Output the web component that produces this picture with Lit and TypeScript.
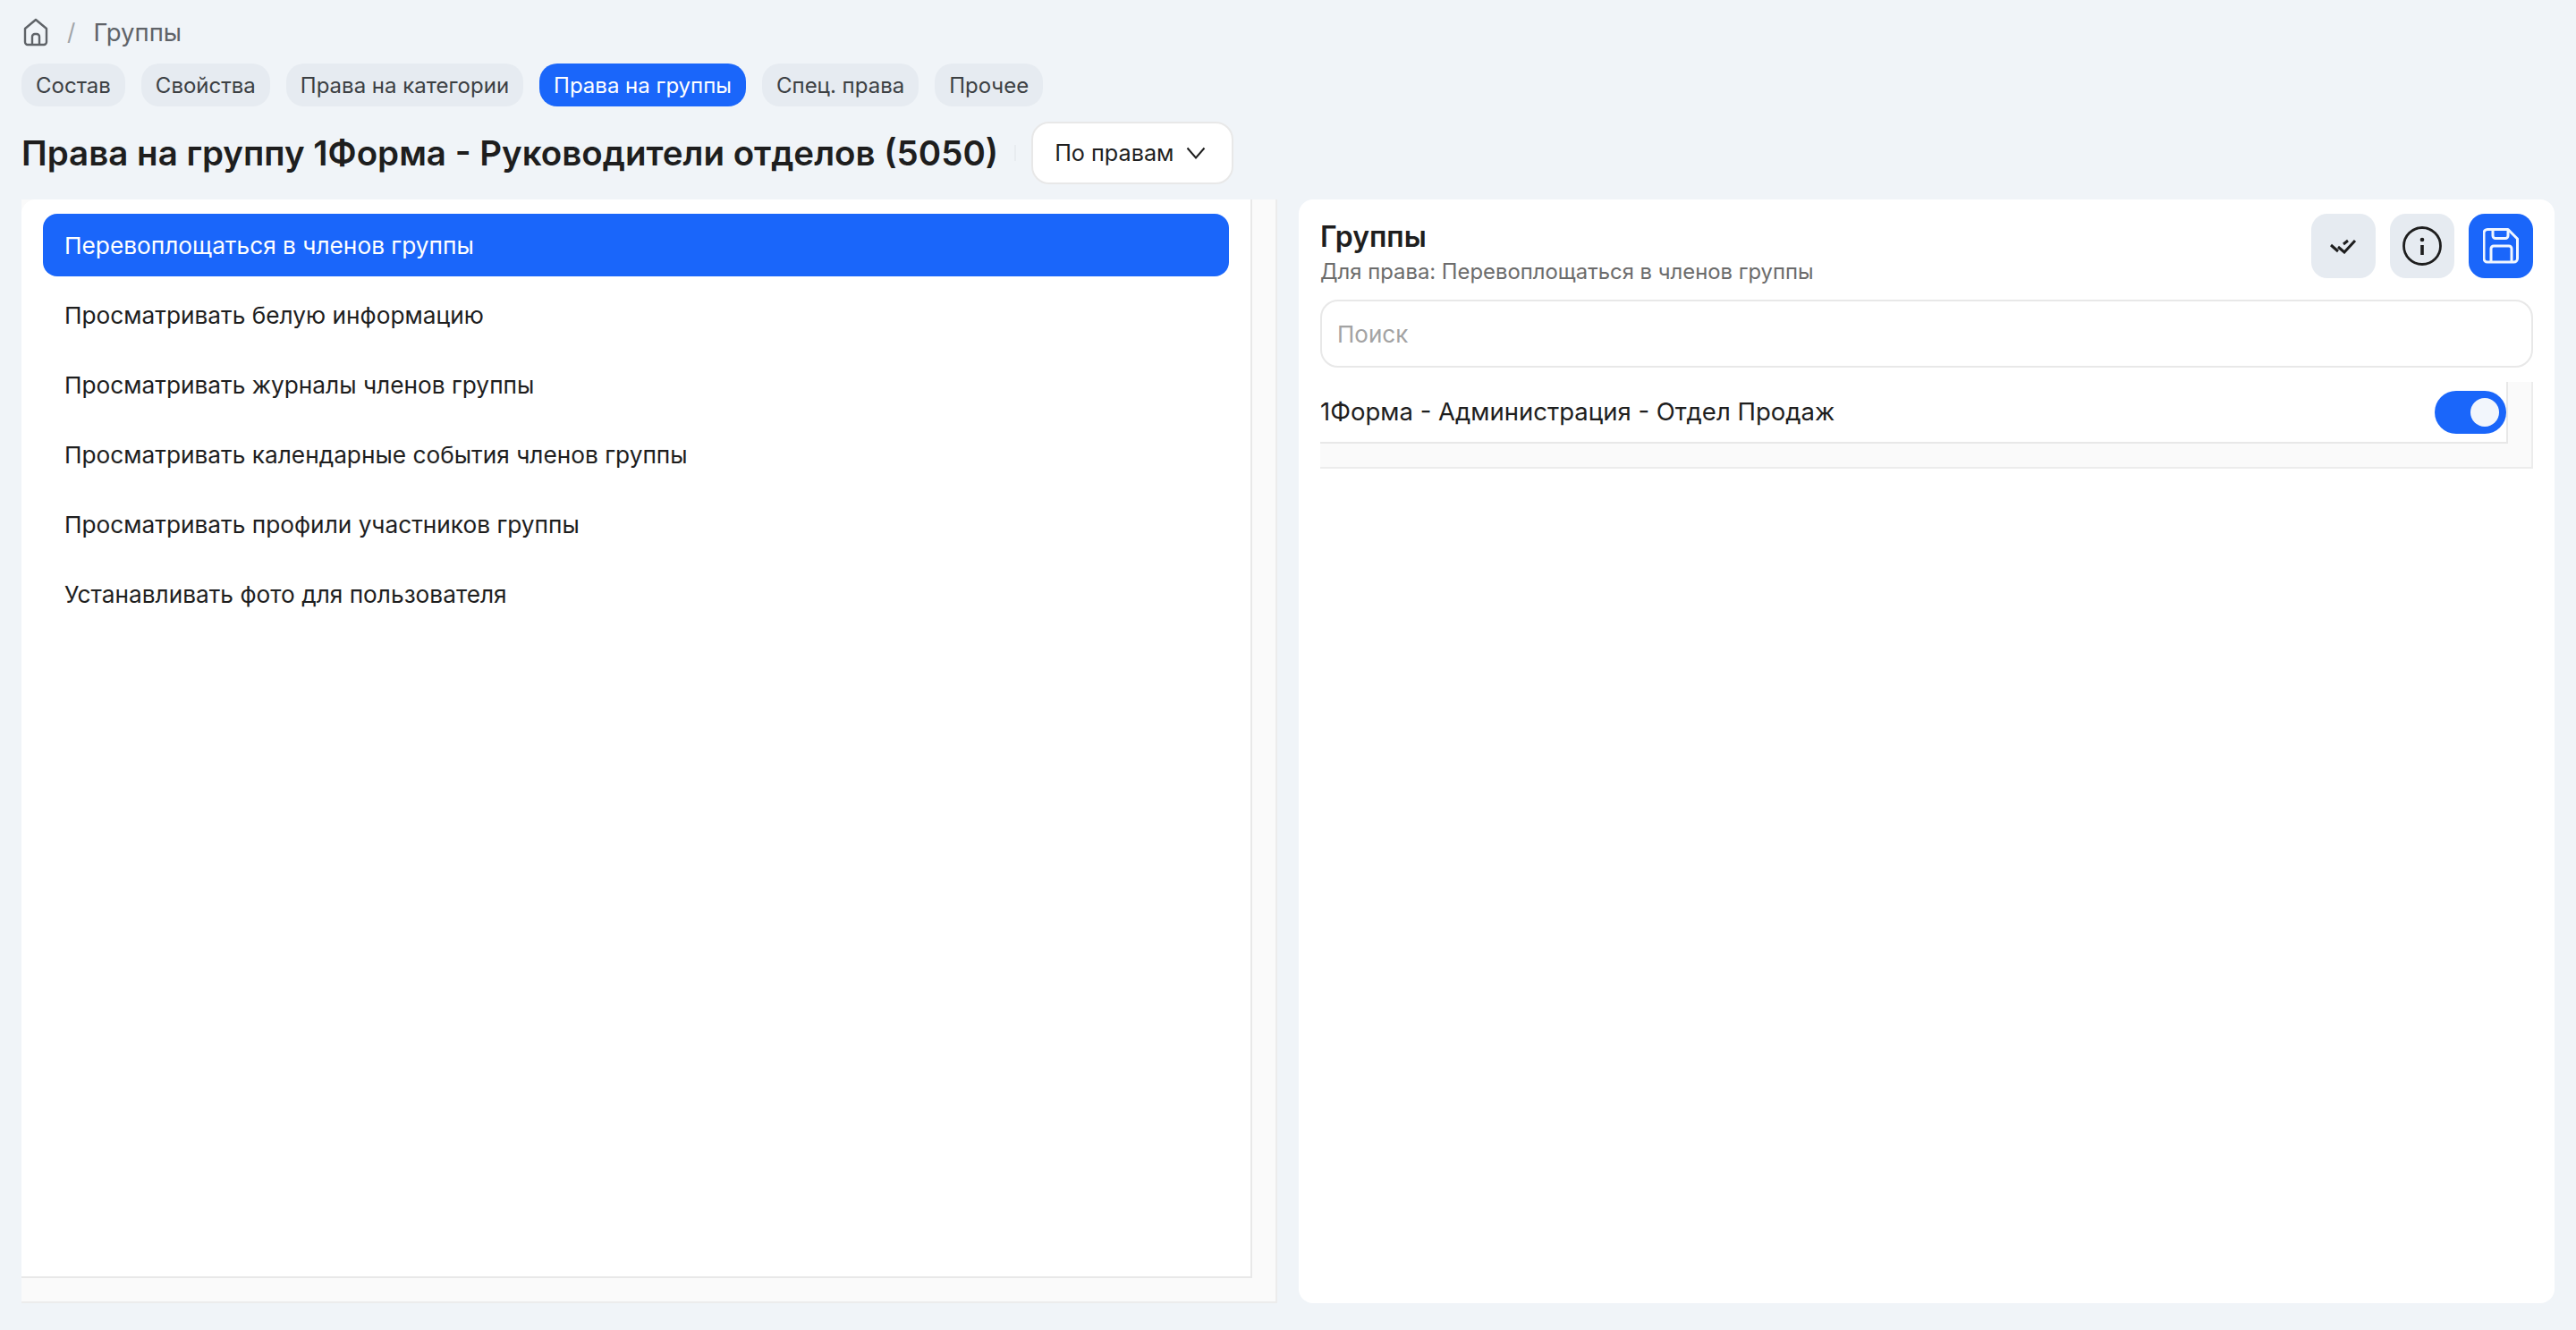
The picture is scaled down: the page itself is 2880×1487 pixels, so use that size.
import { LitElement, html, css } from 'lit';
import { customElement, state } from 'lit/decorators.js';

const tabs = ['Состав', 'Свойства', 'Права на категории', 'Права на группы', 'Спец. права', 'Прочее'];
const rights = [
  'Перевоплощаться в членов группы',
  'Просматривать белую информацию',
  'Просматривать журналы членов группы',
  'Просматривать календарные события членов группы',
  'Просматривать профили участников группы',
  'Устанавливать фото для пользователя',
];

@customElement('app-root')
export class AppRoot extends LitElement {
  static styles = css`
    :host {
      display: block;
      height: 1487px;
      box-sizing: border-box;
      padding: 0 24px 30px;
      background: #f0f4f8;
      font-family: Inter, 'Noto Sans', sans-serif;
      color: #1e1e1e;
      overflow: hidden;
    }
    .page {
      display: flex;
      flex-direction: column;
      height: 100%;
    }
    .crumbs {
      display: flex;
      align-items: center;
      height: 71px;
      color: #5f6368;
      font-size: 27.5px;
      box-sizing: border-box;
    }
    .crumbs svg {
      width: 28px;
      height: 32px;
      margin-left: 2px;
    }
    .sep {
      margin: 0 20px 0 21px;
      color: #a0a4a8;
      font-size: 26px;
    }
    .tabs {
      display: flex;
      gap: 18px;
    }
    .tab {
      height: 48px;
      line-height: 49px;
      padding: 0 16px;
      border-radius: 20px;
      background: #e6ebf1;
      color: #3c4043;
      font-size: 24px;
    }
    .tab.on {
      background: #1a66fa;
      color: #fff;
    }
    .head {
      display: flex;
      align-items: center;
      height: 104px;
    }
    h1 {
      margin: 0;
      font-size: 38.5px;
      font-weight: 600;
    }
    .rule {
      width: 2px;
      height: 18px;
      margin: 0 17px 0 18px;
      background: #e8ecf0;
    }
    .select {
      display: flex;
      align-items: center;
      justify-content: space-between;
      box-sizing: border-box;
      width: 226px;
      height: 70px;
      padding: 0 28px 0 24px;
      border: 2px solid #e8e8e8;
      border-radius: 20px;
      background: #fff;
      font-size: 25.2px;
    }
    .select svg {
      width: 24px;
      height: 24px;
    }
    .cols {
      flex: 1;
      display: flex;
      min-height: 0;
      gap: 24px;
    }
    .left {
      flex: none;
      display: flex;
      width: 1404px;
      box-sizing: border-box;
      padding: 0 26px 26px 0;
      border-right: 2px solid #ececec;
      border-bottom: 2px solid #ececec;
      background: #fafafa;
    }
    .list {
      flex: 1;
      display: flex;
      flex-direction: column;
      gap: 8px;
      padding: 16px 24px;
      border-right: 2px solid #e8e8e8;
      border-bottom: 2px solid #e8e8e8;
      border-top-left-radius: 16px;
      background: #fff;
    }
    .item {
      height: 70px;
      line-height: 71px;
      padding: 0 24px;
      border-radius: 16px;
      font-size: 26.25px;
    }
    .item.on {
      background: #1a66fa;
      color: #fff;
    }
    .right {
      flex: 1;
      padding: 16px 24px;
      border-radius: 16px;
      background: #fff;
    }
    .top {
      display: flex;
      justify-content: space-between;
    }
    .name {
      margin-top: 7px;
      font-size: 32px;
      font-weight: 600;
      line-height: 38px;
    }
    .sub {
      margin-top: 5px;
      color: #6b6b6b;
      font-size: 23.85px;
      line-height: 30px;
    }
    .btns {
      display: flex;
      gap: 16px;
    }
    .btn {
      display: flex;
      align-items: center;
      justify-content: center;
      width: 72px;
      height: 72px;
      border-radius: 18px;
      background: #e6ebf1;
    }
    .btn.on {
      background: #1a66fa;
    }
    .search {
      box-sizing: border-box;
      height: 76px;
      margin-top: 16px;
      padding: 0 17px;
      border: 2px solid #e8e8e8;
      border-radius: 20px;
      color: #a3a3a3;
      font-size: 26px;
      line-height: 74px;
    }
    .scroll {
      height: 97px;
      margin-top: 16px;
      box-sizing: border-box;
      padding: 0 26px 26px 0;
      border-right: 2px solid #ececec;
      border-bottom: 2px solid #ececec;
      background: #fafafa;
    }
    .row {
      display: flex;
      align-items: center;
      justify-content: space-between;
      box-sizing: border-box;
      height: 69px;
      border-right: 2px solid #e8e8e8;
      border-bottom: 2px solid #e8e8e8;
      background: #fff;
      font-size: 27.5px;
      padding-bottom: 2px;
    }
    .toggle {
      display: flex;
      justify-content: flex-end;
      align-items: center;
      box-sizing: border-box;
      width: 80px;
      height: 48px;
      padding: 0 8px;
      border-radius: 24px;
      background: #1a66fa;
      margin-top: 2px;
    }
    .knob {
      width: 32px;
      height: 32px;
      border-radius: 50%;
      background: #f2f6fc;
    }
  `;

  @state() active = 0;

  render() {
    return html`
      <div class="page">
        <div class="crumbs">
          <svg viewBox="0 0 28 32" fill="none" stroke="#5f6368" stroke-width="2.4" stroke-linejoin="round">
            <path d="M2 12 14 2l12 10v15a3 3 0 0 1-3 3H5a3 3 0 0 1-3-3z" />
            <path d="M10 30V21a3 3 0 0 1 3-3h2a3 3 0 0 1 3 3v9" />
          </svg>
          <span class="sep">/</span>
          <span>Группы</span>
        </div>
        <div class="tabs">
          ${tabs.map(t => html`<div class="tab ${t === 'Права на группы' ? 'on' : ''}">${t}</div>`)}
        </div>
        <div class="head">
          <h1>Права на группу 1Форма - Руководители отделов (5050)</h1>
          <div class="rule"></div>
          <div class="select">
            По правам
            <svg viewBox="0 0 24 24" fill="none" stroke="#1e1e1e" stroke-width="2"><path d="M2.500 6.500 12 17.500l9.500-11" /></svg>
          </div>
        </div>
        <div class="cols">
          <div class="left">
            <div class="list">
              ${rights.map((r, i) => html`<div class="item ${i === this.active ? 'on' : ''}">${r}</div>`)}
            </div>
          </div>
          <div class="right">
            <div class="top">
              <div>
                <div class="name">Группы</div>
                <div class="sub">Для права: ${rights[this.active]}</div>
              </div>
              <div class="btns">
                <div class="btn">
                  <svg width="32" height="18" viewBox="0 0 32 18" fill="none" stroke="#1e1e1e" stroke-width="3">
                    <path d="M2 8l8 7M10 10l7 6L29 3M16 7l5-4" />
                  </svg>
                </div>
                <div class="btn">
                  <svg width="44" height="44" viewBox="0 0 44 44" fill="none" stroke="#1e1e1e" stroke-width="2.800">
                    <circle cx="22" cy="22" r="20.500" />
                    <path d="M22 21v11" stroke-width="3.600" />
                    <circle cx="22" cy="15" r="2.300" fill="#1e1e1e" stroke="none" />
                  </svg>
                </div>
                <div class="btn on">
                  <svg width="40" height="40" viewBox="0 0 40 40" fill="none" stroke="#f0f6ff" stroke-width="3" stroke-linejoin="round">
                    <path d="M5 1.500h23l10.500 10.500V34a4 4 0 0 1-4 4H5a4 4 0 0 1-4-4V5.500a4 4 0 0 1 4-4z" />
                    <path d="M11 1.500v7a3 3 0 0 0 3 3h11a3 3 0 0 0 3-3v-7" />
                    <path d="M9 38V23a3 3 0 0 1 3-3h17a3 3 0 0 1 3 3v15" />
                  </svg>
                </div>
              </div>
            </div>
            <div class="search">Поиск</div>
            <div class="scroll">
              <div class="row">
                <span>1Форма - Администрация - Отдел Продаж</span>
                <div class="toggle"><div class="knob"></div></div>
              </div>
            </div>
          </div>
        </div>
      </div>
    `;
  }
}
